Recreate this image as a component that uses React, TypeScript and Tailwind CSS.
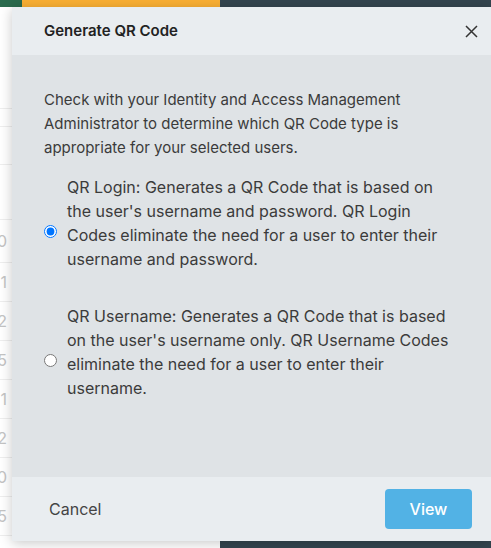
import React from "react";

const digits = ["1", "2", "5", "1", "2", "0", "5"];

export default function App() {
  return (
    <div
      className="relative h-[548px] w-[491px] overflow-hidden bg-white flex flex-col"
      style={{ fontFamily: "Inter, 'Noto Sans', sans-serif" }}
    >
      {/* background page */}
      <div className="flex h-[7px] shrink-0">
        <div className="w-[22px] bg-[#2a6a4d]" />
        <div className="w-[198px] bg-[#fbb034]" />
        <div className="flex-1 bg-[#34454f]" />
      </div>
      <div className="flex-1 flex flex-col text-[16px] text-[#c4c4c4]">
        <div className="h-[102px] border-b border-[#eeeeee]" />
        <div className="h-[18px] border-b border-[#eeeeee]" />
        <div className="h-[38px] border-b border-[#eeeeee]" />
        <div className="h-[55px] border-b border-[#eeeeee]" />
        <div className="h-[43px] border-b border-[#eeeeee] flex items-center">
          <div className="w-[7px] overflow-hidden flex justify-end whitespace-nowrap">10</div>
        </div>
        {digits.map((d, i) => (
          <div key={i} className="h-[39px] border-b border-[#eeeeee] flex items-center">
            <div className="w-[7px] overflow-hidden flex justify-end whitespace-nowrap">1{d}</div>
          </div>
        ))}
      </div>
      <div className="flex h-[7px] shrink-0">
        <div className="w-[220px] bg-white" />
        <div className="flex-1 bg-[#34454f]" />
      </div>

      {/* modal */}
      <div className="absolute left-[12px] top-[7px] w-[479px] h-[534px] flex flex-col shadow-[0_2px_12px_rgba(0,0,0,0.22)]">
        <div className="h-[48px] shrink-0 bg-[#e9edf0] flex items-center justify-between pl-8 pr-[10px]">
          <h2 className="text-[15px] font-semibold text-[#222222]">Generate QR Code</h2>
          <button className="w-[20px] h-[20px] flex items-center justify-center text-[#333333]">
            <svg width="13" height="13" viewBox="0 0 13 13" fill="none" stroke="currentColor" strokeWidth="1.5">
              <path d="M1 1L12 12M12 1L1 12" />
            </svg>
          </button>
        </div>
        <div className="flex-1 bg-[#dfe3e6] pl-8 pr-9 pt-[33px] text-[15px] leading-[24px] text-[#3b3b3b]">
          <p>
            Check with your Identity and Access Management Administrator to determine which QR Code type is
            appropriate for your selected users.
          </p>
          <label className="mt-[15px] flex items-center gap-[10px] text-[16px]">
            <input type="radio" name="qr" defaultChecked className="w-[13px] h-[13px] shrink-0 translate-y-[8px] accent-[#0075ff]" />
            <span>
              QR Login: Generates a QR Code that is based on the user's username and password. QR Login Codes
              eliminate the need for a user to enter their username and password.
            </span>
          </label>
          <label className="mt-[33px] flex items-center gap-[10px] text-[16px]">
            <input type="radio" name="qr" className="w-[13px] h-[13px] shrink-0 translate-y-[8px]" />
            <span>
              QR Username: Generates a QR Code that is based on the user's username only. QR Username Codes
              eliminate the need for a user to enter their username.
            </span>
          </label>
        </div>
        <div className="h-[64px] shrink-0 bg-[#e9edf0] flex items-center justify-between pl-[37px] pr-[19px]">
          <button className="text-[16px] text-[#444444]">Cancel</button>
          <button className="w-[87px] h-[40px] rounded-[4px] bg-[#52b2e5] text-white text-[16px] font-medium">
            View
          </button>
        </div>
      </div>
    </div>
  );
}
